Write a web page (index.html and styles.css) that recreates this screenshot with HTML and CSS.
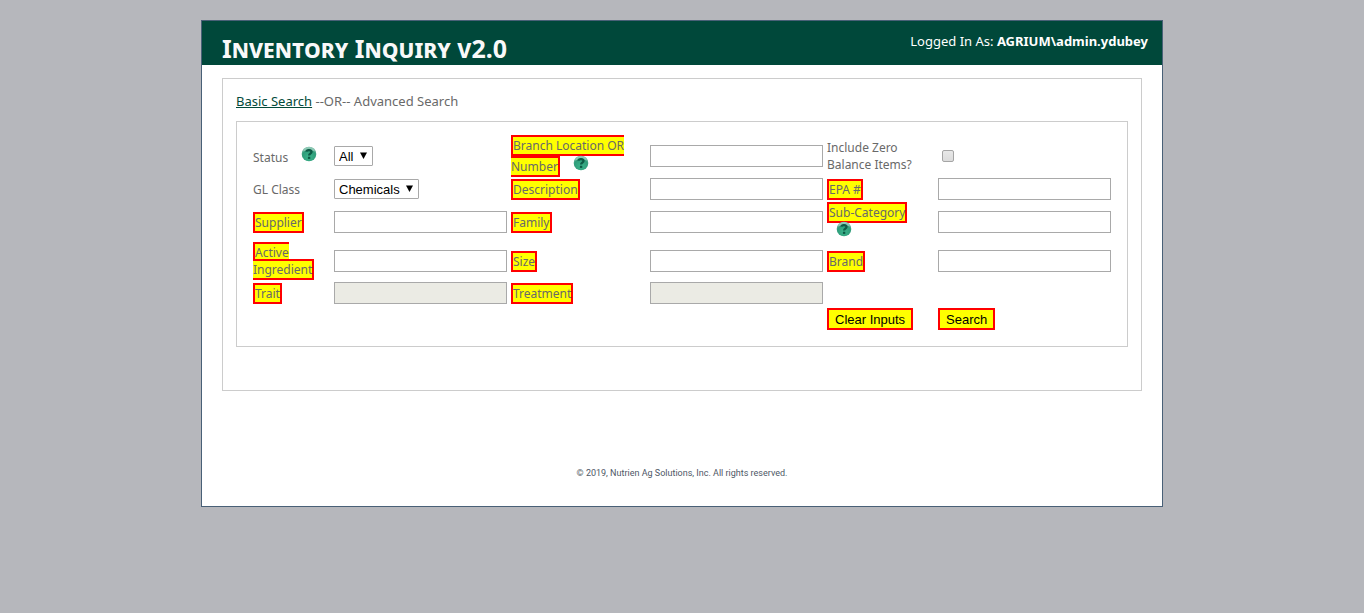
FILE: index.html
```html
<!DOCTYPE html>
<html lang="en">
<head>
<meta charset="utf-8">
<title>Inventory Inquiry</title>
<link rel="stylesheet" href="styles.css">
</head>
<body>
<svg class="defs" aria-hidden="true">
  <defs>
    <radialGradient id="ball" cx="50%" cy="70%" r="65%">
      <stop offset="0" stop-color="#3cb58c"/>
      <stop offset="0.7" stop-color="#2f9d7a"/>
      <stop offset="1" stop-color="#5fae94"/>
    </radialGradient>
    <symbol id="help" viewBox="0 0 16 16">
      <circle cx="8" cy="8" r="7.3" fill="url(#ball)"/>
      <path d="M1.8 5.5a6.5 6.5 0 0 1 12.4 0Q8 3.4 1.8 5.5z" fill="#b5dfd0" opacity=".6"/>
      <path d="M5.4 5.6C5.7 3.4 10.6 3.5 10.5 6c0 1.6-2.4 1.7-2.4 3.5" fill="none" stroke="#0d5a45" stroke-width="2.3"/>
      <path d="M6.9 10.7h2.4v2.2H6.9z" fill="#0d5a45"/>
    </symbol>
    <symbol id="arrow" viewBox="0 0 7 7">
      <path d="M0 0.5h7L3.5 7z" fill="#000"/>
    </symbol>
  </defs>
</svg>
<div class="page">
  <header class="header">
    <h1 class="title">Inventory Inquiry v2.0</h1>
    <div class="login">Logged In As: <b>AGRIUM\admin.ydubey</b></div>
  </header>
  <main class="main">
    <div class="modes"><a class="mode-link" href="#">Basic Search</a> --OR-- Advanced Search</div>
    <form class="search">
      <div class="label"><label for="status">Status</label><svg class="help"><use href="#help"/></svg></div>
      <div class="field"><span class="picker"><select class="select" id="status"><option>All</option></select><svg class="arrow"><use href="#arrow"/></svg></span></div>
      <div class="label branch"><label class="mark" for="branch">Branch Location OR Number</label><svg class="help"><use href="#help"/></svg></div>
      <input class="text" id="branch" type="text">
      <div class="label"><label for="zero">Include Zero Balance Items?</label></div>
      <div class="field"><input class="check" id="zero" type="checkbox"></div>

      <div class="label"><label for="gl">GL Class</label></div>
      <div class="field"><span class="picker"><select class="select" id="gl"><option>Chemicals</option></select><svg class="arrow"><use href="#arrow"/></svg></span></div>
      <div class="label"><label class="mark" for="description">Description</label></div>
      <input class="text" id="description" type="text">
      <div class="label"><label class="mark" for="epa">EPA #</label></div>
      <input class="text" id="epa" type="text">

      <div class="label"><label class="mark" for="supplier">Supplier</label></div>
      <input class="text" id="supplier" type="text">
      <div class="label"><label class="mark" for="family">Family</label></div>
      <input class="text" id="family" type="text">
      <div class="label"><label class="mark" for="sub">Sub-Category</label> <svg class="help help-below"><use href="#help"/></svg></div>
      <input class="text" id="sub" type="text">

      <div class="label"><label class="mark" for="active">Active Ingredient</label></div>
      <input class="text" id="active" type="text">
      <div class="label"><label class="mark" for="size">Size</label></div>
      <input class="text" id="size" type="text">
      <div class="label"><label class="mark" for="brand">Brand</label></div>
      <input class="text" id="brand" type="text">

      <div class="label"><label class="mark" for="trait">Trait</label></div>
      <input class="text" id="trait" type="text" disabled>
      <div class="label"><label class="mark" for="treatment">Treatment</label></div>
      <input class="text" id="treatment" type="text" disabled>

      <button class="button clear" type="reset">Clear Inputs</button>
      <button class="button find" type="button">Search</button>
    </form>
  </main>
  <footer class="footer">© 2019, Nutrien Ag Solutions, Inc. All rights reserved.</footer>
</div>
</body>
</html>
```
FILE: styles.css
```css
* { box-sizing: border-box; }
body {
  margin: 0;
  background: #b6b7bc;
  color: #696969;
  font: 12px/17px "Noto Sans", "Open Sans", sans-serif;
}
.defs { display: block; width: 0; height: 0; }
.page {
  max-width: 962px;
  margin: 20px auto 0;
  background: #fff;
  border: 1px solid #496077;
}
.header {
  display: flex;
  justify-content: space-between;
  padding: 11px 14px 0 20px;
  min-height: 44px;
  background: #00483a;
  color: #f9f9f9;
}
.title {
  margin: 0;
  font-size: 25px;
  line-height: 32px;
  font-weight: 700;
  font-variant: small-caps;
}
.login { font-size: 13px; line-height: 18px; color: #fff; }
.main {
  margin: 13px 20px 0;
  padding: 14px 13px 43px;
  border: 1px solid #ccc;
}
.modes { margin-bottom: 11px; font-size: 13px; }
.mode-link { color: #034a3a; }
.search {
  display: grid;
  grid-template-columns: 77fr 173fr 135fr 173fr 107fr 173fr;
  grid-template-rows: 40px 22px 40px 34px 26px 22px;
  gap: 2px 4px;
  align-items: center;
  padding: 14px 16px 16px;
  border: 1px solid #ccc;
}
.field { display: flex; align-items: center; }
.mark { background: #ff0; border: 2px solid #f00; }
.help { width: 16px; height: 16px; margin-left: 13px; }
.help-below { margin-left: 9px; }
.branch { line-height: 18px; }
.text {
  width: 100%;
  height: 22px;
  padding: 1px 2px;
  border: 1px solid #a9a9a9;
  background: #fff;
}
.text:disabled { background: #ebebe4; }
.picker { position: relative; display: flex; }
.select {
  appearance: none;
  height: 20px;
  padding: 0 18px 0 4px;
  border: 1px solid #a9a9a9;
  border-radius: 1px;
  background: #fff;
  color: #000;
  font: 13px "Liberation Sans", sans-serif;
}
.arrow {
  position: absolute;
  top: 6px;
  right: 6px;
  width: 7px;
  height: 7px;
  pointer-events: none;
}
.button {
  grid-row: 6;
  justify-self: start;
  height: 22px;
  padding: 0 6px;
  background: #ff0;
  border: 2px solid #f00;
  color: #000;
  font: 13px "Liberation Sans", sans-serif;
  white-space: nowrap;
}
.clear { grid-column: 5; }
.find { grid-column: 6; }
.check {
  appearance: none;
  width: 12px;
  height: 12px;
  margin: 0 0 0 4px;
  border: 1px solid #a5a5a5;
  border-radius: 2px;
  background: linear-gradient(#e8e8e8, #dcdcdc);
}
.footer {
  margin: 74px 0 0;
  padding: 0 0 25px;
  color: #4e5766;
  font: 9px/16px Roboto, sans-serif;
  text-align: center;
}
```
